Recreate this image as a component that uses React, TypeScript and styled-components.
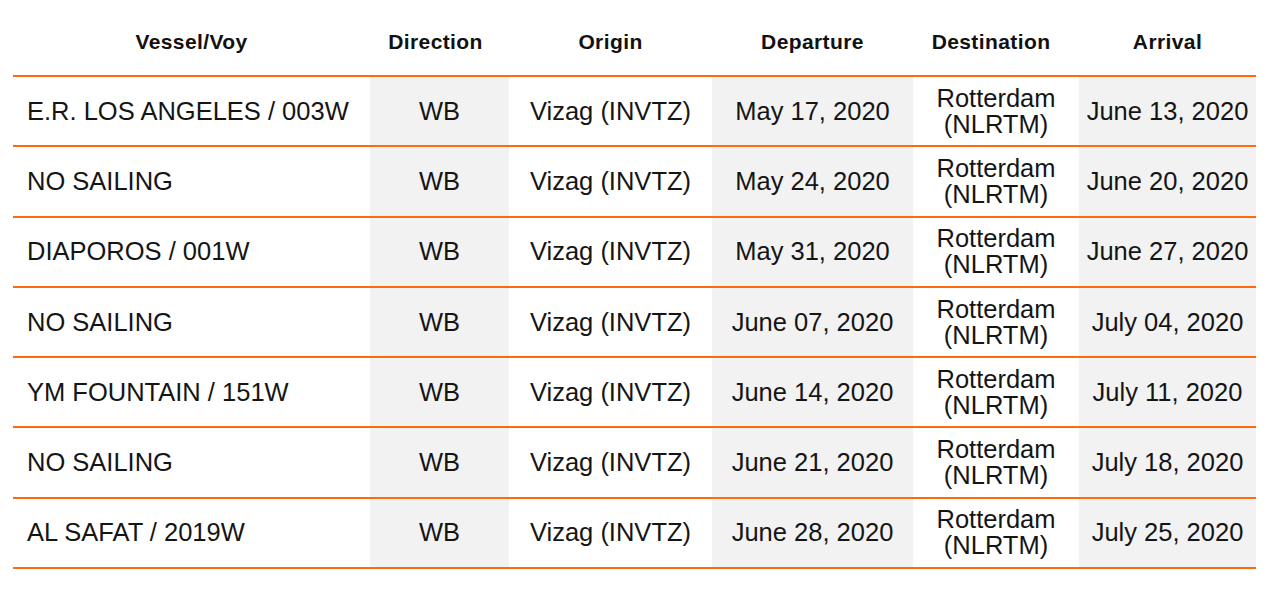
import React from "react";
import styled, { createGlobalStyle } from "styled-components";

const GlobalStyle = createGlobalStyle`
  html, body { margin: 0; padding: 0; background: #ffffff; }
  body { font-family: "Liberation Sans", Arial, sans-serif; }
`;

const Page = styled.div`
  padding: 0 0 0 13px;
`;

const Table = styled.table`
  border-collapse: collapse;
  table-layout: fixed;
  width: 1243px;
`;

const HeadCell = styled.th<{ $w: number; $shift?: number }>`
  width: ${(p) => p.$w}px;
  height: 76px;
  padding: 8px ${(p) => p.$shift ?? 0}px 0 0;
  box-sizing: border-box;
  font-family: "Liberation Sans", Arial, sans-serif;
  font-weight: 700;
  font-size: 21px;
  letter-spacing: 0.4px;
  color: #111;
  text-align: center;
  vertical-align: middle;
  border-bottom: 2px solid #ff6a0a;
`;

const Row = styled.tr`
  height: 70.3px;
  border-bottom: 2px solid #ff6a0a;
`;

const Cell = styled.td<{ $shade?: boolean; $left?: boolean }>`
  padding: 0 0 1px ${(p) => (p.$left ? "14px" : "0")};
  background: ${(p) => (p.$shade ? "#f2f2f2" : "#ffffff")};
  font-family: "Liberation Sans", Arial, sans-serif;
  font-size: 25.5px;
  line-height: 26px;
  color: #151515;
  text-align: ${(p) => (p.$left ? "left" : "center")};
  vertical-align: middle;
  white-space: nowrap;
`;

const columns = [
  { label: "Vessel/Voy", w: 357, shift: 0 },
  { label: "Direction", w: 139, shift: 8 },
  { label: "Origin", w: 203, shift: 0 },
  { label: "Departure", w: 201, shift: 0 },
  { label: "Destination", w: 166, shift: 10 },
  { label: "Arrival", w: 177, shift: 0 },
];

const rows = [
  ["E.R. LOS ANGELES / 003W", "May 17, 2020", "June 13, 2020"],
  ["NO SAILING", "May 24, 2020", "June 20, 2020"],
  ["DIAPOROS / 001W", "May 31, 2020", "June 27, 2020"],
  ["NO SAILING", "June 07, 2020", "July 04, 2020"],
  ["YM FOUNTAIN / 151W", "June 14, 2020", "July 11, 2020"],
  ["NO SAILING", "June 21, 2020", "July 18, 2020"],
  ["AL SAFAT / 2019W", "June 28, 2020", "July 25, 2020"],
];

export default function App() {
  return (
    <Page>
      <GlobalStyle />
      <Table>
        <thead>
          <tr>
            {columns.map((c) => (
              <HeadCell key={c.label} $w={c.w} $shift={c.shift}>
                {c.label}
              </HeadCell>
            ))}
          </tr>
        </thead>
        <tbody>
          {rows.map((r, i) => (
            <Row key={i}>
              <Cell $left>{r[0]}</Cell>
              <Cell $shade>WB</Cell>
              <Cell>Vizag (INVTZ)</Cell>
              <Cell $shade>{r[1]}</Cell>
              <Cell>
                Rotterdam
                <br />
                (NLRTM)
              </Cell>
              <Cell $shade>{r[2]}</Cell>
            </Row>
          ))}
        </tbody>
      </Table>
    </Page>
  );
}
